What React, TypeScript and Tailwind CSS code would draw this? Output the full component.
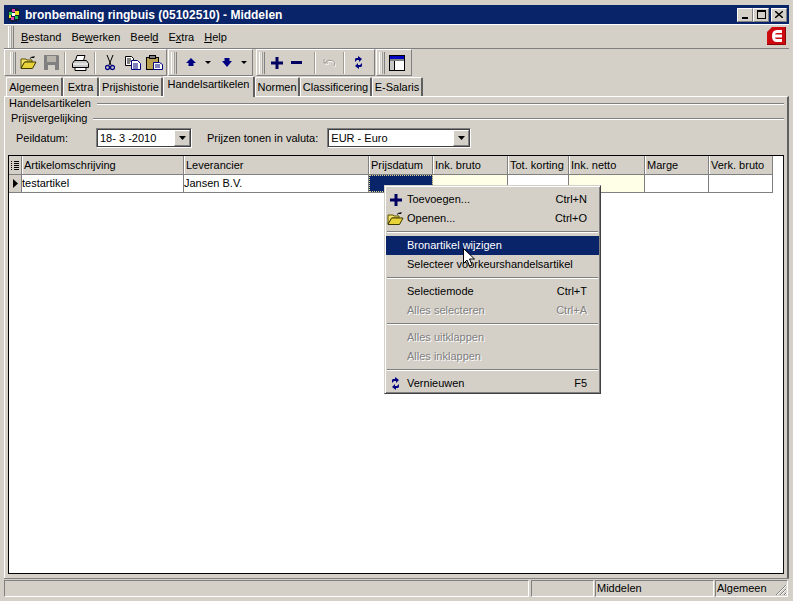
import React from 'react';

const raised = 'border border-t-white border-l-white border-r-[#808080] border-b-[#808080]';
const sunken = 'border border-t-[#808080] border-l-[#808080] border-r-white border-b-white';

// toolbar icons
const OpenIcon = ({ className = '' }: { className?: string }) => (
  <svg className={className} width="17" height="14" viewBox="0 0 17 14">
    <path d="M1 3h5l1 1h5v2H5L1 12z" fill="#f5e36a" stroke="#5a5200" />
    <path d="M1 12.5 4.5 6H16l-3.500 6.500z" fill="#e8d23a" stroke="#3f3a00" />
    <path d="M10 2.500Q12 0 14 1.500M14 1.500V0M14 1.500h-2" fill="none" stroke="#000" />
  </svg>
);
const SaveIcon = () => (
  <svg width="15" height="15" viewBox="0 0 15 15">
    <path d="M0 0h14l1 1v14H0z" fill="#808080" />
    <rect x="3" y="1" width="9" height="6" fill="#b8b4ac" />
    <rect x="4" y="10" width="7" height="5" fill="#d4d0c8" />
  </svg>
);
const PrintIcon = () => (
  <svg width="17" height="16" viewBox="0 0 17 16">
    <path d="M5 .5h8l-1.500 5h-8z" fill="#fff" stroke="#000" />
    <path d="M2.500 5.500h12l2 3v4h-16v-4z" fill="#c8c8c8" stroke="#000" />
    <path d="M1 9h15" stroke="#fff" />
    <path d="M3 12.500h11v3H3z" fill="#fff" stroke="#000" />
  </svg>
);
const CutIcon = () => (
  <svg width="10" height="16" viewBox="0 0 10 16">
    <path d="M2 0l4 10M8 0 4 10" stroke="#000" fill="none" />
    <circle cx="2.500" cy="12.500" r="2" fill="none" stroke="#000080" strokeWidth="1.300" />
    <circle cx="7.500" cy="12.500" r="2" fill="none" stroke="#000080" strokeWidth="1.300" />
  </svg>
);
const CopyIcon = () => (
  <svg width="16" height="14" viewBox="0 0 16 14">
    <path d="M.5.500h6l2 2v7h-8z" fill="#fff" stroke="#000" />
    <path d="M2 3h4M2 5h4M2 7h3" stroke="#000" />
    <path d="M6.500 4.500h6l3 3v6h-9z" fill="#fff" stroke="#000080" />
    <path d="M8 8h5M8 10h5M8 12h5" stroke="#000080" />
  </svg>
);
const PasteIcon = () => (
  <svg width="17" height="15" viewBox="0 0 17 15">
    <rect x=".5" y="2.500" width="12" height="12" fill="#b8a050" stroke="#000" />
    <rect x="3.500" y=".5" width="6" height="3" fill="#808080" stroke="#000" />
    <path d="M7.500 7.500h6l3 2v5h-9z" fill="#fff" stroke="#000080" />
    <path d="M9 10h5M9 12h5" stroke="#000080" />
  </svg>
);
const UpIcon = () => (
  <svg width="10" height="9" viewBox="0 0 10 9"><path d="M5 0l5 5H7.500v3h-5V5H0z" fill="#000080" /></svg>
);
const DownIcon = () => (
  <svg width="10" height="9" viewBox="0 0 10 9"><path d="M2.500 0h5v3H10L5 9 0 3h2.500z" fill="#000080" /></svg>
);
const Caret = () => (
  <svg width="6" height="3" viewBox="0 0 6 3"><path d="M0 0h6L3 3z" fill="#000" /></svg>
);
const PlusIcon = ({ size = 12 }: { size?: number }) => (
  <svg width={size} height={size} viewBox="0 0 12 12"><path d="M4.500 0h3v4.500H12v3H7.500V12h-3V7.500H0v-3h4.500z" fill="#000060" /></svg>
);
const MinusIcon = () => (
  <svg width="11" height="3" viewBox="0 0 11 3"><rect width="11" height="3" fill="#000060" /></svg>
);
const UndoIcon = () => (
  <svg width="13" height="9" viewBox="0 0 13 9">
    <path d="M2 2v4h4M2.500 6Q5 2.500 9 3.500T12 9" fill="none" stroke="#fff" />
    <path d="M1 1v4h4M1.500 5Q5 1 9 2.500T11 8" fill="none" stroke="#a09c94" />
  </svg>
);
const RefreshIcon = () => (
  <svg width="9" height="13" viewBox="0 0 9 13">
    <path d="M4 0v2H2Q1 2 1 4v2l2-2h2V6l3-3zM5 13v-2h2q1 0 1-2V7L6 9H4V7l-3 3z" fill="#000080" />
  </svg>
);
const LayoutIcon = () => (
  <svg width="16" height="16" viewBox="0 0 16 16">
    <rect x=".5" y=".5" width="15" height="15" fill="#fff" stroke="#000" />
    <rect x="1" y="1" width="14" height="3" fill="#0000c0" />
    <rect x="1" y="4" width="14" height="2" fill="#808080" />
    <rect x="1" y="6" width="4" height="9" fill="#c8c8c8" />
    <path d="M5.500 6v9" stroke="#000" />
  </svg>
);

const Grip = () => (
  <div className="flex w-[6px] h-[22px] mr-[2px] border-x border-l-white border-r-[#808080] bg-[#d4d0c8] items-stretch justify-center">
    <div className="w-[2px] bg-[#e8e6e0] border-r border-[#a0a0a0]" />
  </div>
);

const Sep = () => <div className="w-[2px] h-[22px] border-l border-r border-l-[#a09c94] border-r-white" />;

const Toolbar = ({ width, children }: { width: number; children: React.ReactNode }) => (
  <div
    className="flex items-center pl-[2px] h-[27px] border-r border-b border-[#808080] border-t border-l border-t-white border-l-white"
    style={{ width }}
  >
    {children}
  </div>
);

const Btn = ({ w, children }: { w: number; children: React.ReactNode }) => (
  <div className="flex items-center justify-center h-[22px] shrink-0" style={{ width: w }}>
    {children}
  </div>
);

const tabs = ['Algemeen', 'Extra', 'Prijshistorie', 'Handelsartikelen', 'Normen', 'Classificering', 'E-Salaris'];
const tabWidths = [57, 36, 64, 92, 45, 72, 51];

const columns = [
  { label: 'Artikelomschrijving', width: 162, value: 'testartikel' },
  { label: 'Leverancier', width: 185, value: 'Jansen B.V.' },
  { label: 'Prijsdatum', width: 64, value: '' },
  { label: 'Ink. bruto', width: 75, value: '' },
  { label: 'Tot. korting', width: 61, value: '' },
  { label: 'Ink. netto', width: 76, value: '' },
  { label: 'Marge', width: 64, value: '' },
  { label: 'Verk. bruto', width: 64, value: '' },
];

const cellBg = ['bg-white', 'bg-white', 'bg-[#0a246a]', 'bg-[#ffffe8]', 'bg-white', 'bg-[#ffffe8]', 'bg-white', 'bg-white'];

type MenuRow = { label: string; shortcut?: string; disabled?: boolean; active?: boolean; icon?: React.ReactNode };

const MenuItem = ({ label, shortcut, disabled, active, icon }: MenuRow) => (
  <div
    className={`relative flex items-center h-[19px] pl-[21px] pr-[12px] justify-between ${
      active ? 'bg-[#0a246a] text-white' : disabled ? 'text-[#808080] [text-shadow:1px_1px_0_#fff]' : 'text-black'
    }`}
  >
    {icon && <span className="absolute left-[1px] top-0 h-[19px] w-[17px] flex items-center justify-center">{icon}</span>}
    <span>{label}</span>
    {shortcut && <span>{shortcut}</span>}
  </div>
);

const MenuSep = () => <div className="h-[2px] my-[3px] mx-[1px] border-t border-b border-t-[#808080] border-b-white" />;

const Fieldset = ({ label, indent }: { label: string; indent: number }) => (
  <div className="flex items-center h-[15px]" style={{ paddingLeft: indent }}>
    <span className="mr-[6px]">{label}</span>
    <div className="flex-1 h-[2px] border-t border-b border-t-[#808080] border-b-white" />
  </div>
);

const ComboArrow = () => (
  <div className={`w-[16px] h-[16px] flex items-center justify-center bg-[#d4d0c8] ${raised}`}>
    <svg width="7" height="4" viewBox="0 0 7 4"><path d="M0 0h7L3.500 4z" fill="#000" /></svg>
  </div>
);

const Combo = ({ width, value }: { width: number; value: string }) => (
  <div className={`flex items-center justify-between h-[20px] bg-white pl-[3px] pr-[1px] ${sunken} outline outline-1 -outline-offset-2 outline-[#404040]`} style={{ width }}>
    <span>{value}</span>
    <ComboArrow />
  </div>
);

export default function App() {
  return (
    <div className="relative w-[793px] h-[601px] overflow-hidden bg-[#d4d0c8] text-black text-[11px] leading-none border-[4px] border-[#d4d0c8] [font-family:'Liberation_Sans',Arial,sans-serif]">
      {/* title bar */}
      <div className="flex items-center h-[19px] mt-[1px] bg-[#0a246a] text-white font-bold text-[12px] pl-[3px] pr-[2px]">
        <svg width="14" height="16" viewBox="0 0 14 16" className="mr-[4px]">
          <path d="M1 4 4 1h7l2 3v9l-3 2H4l-3-2z" fill="#102040" />
          <path d="M2 5h3v3H2zM8 9h3v3H8z" fill="#20c050" />
          <path d="M5 2h3v3H5zM4 10h3v3H4z" fill="#e040b0" />
          <path d="M8 4h4v4H8zM2 8h2v3H2z" fill="#e8e020" />
          <path d="M5 6h3v3H5z" fill="#fff" />
        </svg>
        <span className="flex-1">bronbemaling ringbuis (05102510) - Middelen</span>
        <div className="flex items-center">
          <div className={`w-[16px] h-[14px] flex items-center justify-center bg-[#d4d0c8] ${raised}`}>
            <div className="w-[6px] h-[2px] bg-black mt-[6px]" />
          </div>
          <div className={`w-[16px] h-[14px] flex items-center justify-center bg-[#d4d0c8] ${raised}`}>
            <div className="w-[9px] h-[9px] border border-black border-t-2" />
          </div>
          <div className={`w-[16px] h-[14px] ml-[2px] flex items-center justify-center bg-[#d4d0c8] ${raised}`}>
            <svg width="8" height="7" viewBox="0 0 8 7"><path d="M0 0l8 7M8 0 0 7" stroke="#000" strokeWidth="1.400" /></svg>
          </div>
        </div>
      </div>

      {/* menu bar */}
      <div className="flex items-center h-[25px] border-t border-white border-b border-b-[#808080] pl-[4px] pr-[3px]">
        <Grip />
        <div className="flex gap-[10px] ml-[5px] mt-[2px]">
          <span><u>B</u>estand</span>
          <span>Be<u>w</u>erken</span>
          <span>Beel<u>d</u></span>
          <span>E<u>x</u>tra</span>
          <span><u>H</u>elp</span>
        </div>
        <svg className="ml-auto -mt-[2px]" width="19" height="18" viewBox="0 0 19 18">
          <path d="M5 0h14v18H0V5z" fill="#cc0a10" />
          <path d="M17 18H0V17h19V0h-1v17z" fill="#8a0508" />
          <path d="M10 3h5v3h-5q-2 0-2 1.500h7v3H8q0 1.500 2 1.500h5v3h-5q-5 0-5-6t5-6z" fill="#fff" />
        </svg>
      </div>

      {/* toolbars */}
      <div className="flex h-[27px] gap-[1px]">
        <Toolbar width={163}>
          <div className="ml-[3px]"><Grip /></div>
          <Btn w={20}><OpenIcon /></Btn>
          <Btn w={26}><SaveIcon /></Btn>
          <Sep />
          <Btn w={28}><PrintIcon /></Btn>
          <Sep />
          <Btn w={27}><CutIcon /></Btn>
          <Btn w={19}><CopyIcon /></Btn>
          <Btn w={24}><PasteIcon /></Btn>
        </Toolbar>
        <Toolbar width={85}>
          <Grip />
          <Btn w={23}><UpIcon /></Btn>
          <Btn w={12}><Caret /></Btn>
          <Btn w={26}><DownIcon /></Btn>
          <Btn w={8}><Caret /></Btn>
        </Toolbar>
        <div className="w-[1px]" />
        <Toolbar width={119}>
          <Grip />
          <Btn w={19}><PlusIcon /></Btn>
          <Btn w={21}><MinusIcon /></Btn>
          <div className="ml-[7px]"><Sep /></div>
          <Btn w={27}><UndoIcon /></Btn>
          <Sep />
          <Btn w={26}><RefreshIcon /></Btn>
        </Toolbar>
        <Toolbar width={36}>
          <Grip />
          <Btn w={20}><LayoutIcon /></Btn>
        </Toolbar>
      </div>

      {/* tabs */}
      <div className="flex items-end h-[20px] pl-[2px]">
        {tabs.map((t, i) => {
          const on = t === 'Handelsartikelen';
          return (
            <div
              key={t}
              className={`flex items-center justify-center border-t border-l border-r-2 border-t-white border-l-white border-r-[#606060] rounded-t-[2px] ${
                on ? 'h-[21px] relative z-10 -mb-[1px] pb-[5px] bg-[#d4d0c8]' : 'h-[19px]'
              }`}
              style={{ width: tabWidths[i] }}
            >
              {t}
            </div>
          );
        })}
      </div>

      {/* tab page */}
      <div className="flex flex-col h-[482px] border-t border-l border-r-2 border-t-white border-l-white border-r-[#606060] px-[3px]">
        <div className="-mt-[1px]"><Fieldset label="Handelsartikelen" indent={1} /></div>
        <Fieldset label="Prijsvergelijking" indent={3} />
        <div className="flex items-center h-[24px] ml-[8px]">
          <span className="w-[80px]">Peildatum:</span>
          <Combo width={96} value="18- 3 -2010" />
          <span className="ml-[15px] mr-[9px]">Prijzen tonen in valuta:</span>
          <Combo width={144} value="EUR - Euro" />
        </div>

        {/* grid */}
        <div className="relative mt-[5px] mb-[4px] flex-1 bg-white border border-black border-r-[#101010]">
          <div className="flex h-[19px] w-[764px] bg-[#d4d0c8] border-b border-[#808080]">
            <div className="w-[13px] flex items-center justify-center border-r border-[#808080]">
              <svg width="8" height="9" viewBox="0 0 8 9">
                <path d="M0 .5h1M3 .5h5M0 2.500h1M3 2.500h5M0 4.500h1M3 4.500h5M0 6.500h1M3 6.500h5M0 8.500h1M3 8.500h5" stroke="#000" />
              </svg>
            </div>
            {columns.map((c) => (
              <div key={c.label} className="flex items-center pl-[1px] border-l border-white border-r border-r-[#808080] overflow-hidden whitespace-nowrap" style={{ width: c.width }}>
                {c.label}
              </div>
            ))}
          </div>
          <div className="flex h-[18px] w-[764px] border-b border-[#808080]">
            <div className="w-[13px] flex items-center justify-center bg-[#d4d0c8] border-r border-[#808080]">
              <svg width="5" height="9" viewBox="0 0 5 9"><path d="M0 0l5 4.500L0 9z" fill="#000" /></svg>
            </div>
            {columns.map((c, i) => (
              <div key={c.label} className={`flex items-center border-r border-[#808080] ${cellBg[i]} ${i === 2 ? 'outline outline-1 -outline-offset-1 outline-dotted outline-[#e0d890]' : ''}`} style={{ width: c.width }}>
                {c.value}
              </div>
            ))}
          </div>
        </div>
      </div>

      {/* status bar */}
      <div className="flex h-[19px] pr-[1px] border-t border-[#808080] pt-[1px]">
        <div className={`w-[525px] ${sunken}`} />
        <div className={`w-[63px] ml-[2px] ${sunken}`} />
        <div className={`w-[119px] ml-[1px] flex items-center pl-[1px] ${sunken}`}>Middelen</div>
        <div className={`relative flex-1 ml-[1px] flex items-center pl-[1px] ${sunken}`}>
          Algemeen
          <svg className="absolute right-0 bottom-0" width="12" height="12" viewBox="0 0 12 12">
            <path d="M11 1 1 11M11 5l-6 6M11 9l-2 2" stroke="#808080" />
            <path d="M12 1 2 11M12 5l-6 6M12 9l-2 2" stroke="#fff" />
          </svg>
        </div>
      </div>

      {/* context menu */}
      <div className="absolute left-[380px] top-[181px] w-[217px] h-[209px] bg-[#d4d0c8] border border-t-[#d4d0c8] border-l-[#d4d0c8] border-r-[#404040] border-b-[#404040] shadow-[inset_1px_1px_0_#fff,inset_-1px_-1px_0_#808080] px-[1px] pt-[4px]">
        <MenuItem label="Toevoegen..." shortcut="Ctrl+N" icon={<PlusIcon />} />
        <MenuItem label="Openen..." shortcut="Ctrl+O" icon={<OpenIcon />} />
        <MenuSep />
        <MenuItem label="Bronartikel wijzigen" active />
        <MenuItem label="Selecteer voorkeurshandelsartikel" />
        <MenuSep />
        <MenuItem label="Selectiemode" shortcut="Ctrl+T" />
        <MenuItem label="Alles selecteren" shortcut="Ctrl+A" disabled />
        <MenuSep />
        <MenuItem label="Alles uitklappen" disabled />
        <MenuItem label="Alles inklappen" disabled />
        <MenuSep />
        <MenuItem label="Vernieuwen" shortcut="F5" icon={<RefreshIcon />} />
      </div>

      {/* mouse cursor */}
      <svg className="absolute left-[459px] top-[244px]" width="13" height="20" viewBox="0 0 13 20">
        <path d="M.5.500v15l3.500-3.500 2.500 6 2.500-1-2.500-6h5z" fill="#fff" stroke="#000" />
      </svg>
    </div>
  );
}
